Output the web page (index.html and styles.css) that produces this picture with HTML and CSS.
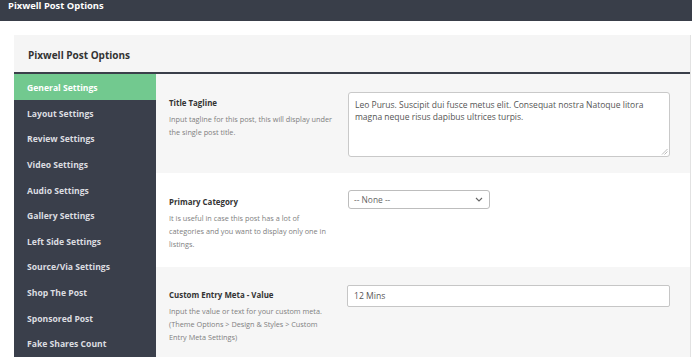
FILE: index.html
```html
<!DOCTYPE html>
<html>
<head>
<meta charset="utf-8">
<link rel="stylesheet" href="styles.css">
</head>
<body>
<div class="topbar">Pixwell Post Options</div>
<div class="panel">
  <div class="panel-head">Pixwell Post Options</div>
  <div class="panel-body">
    <ul class="tabs">
      <li class="tab active">General Settings</li>
      <li class="tab">Layout Settings</li>
      <li class="tab">Review Settings</li>
      <li class="tab">Video Settings</li>
      <li class="tab">Audio Settings</li>
      <li class="tab">Gallery Settings</li>
      <li class="tab">Left Side Settings</li>
      <li class="tab">Source/Via Settings</li>
      <li class="tab">Shop The Post</li>
      <li class="tab">Sponsored Post</li>
      <li class="tab">Fake Shares Count</li>
    </ul>
    <div class="content">
      <div class="row alt">
        <div class="label">
          <div class="title">Title Tagline</div>
          <div class="desc">Input tagline for this post, this will display under the single post title.</div>
        </div>
        <div class="field">
          <div class="textarea">Leo Purus. Suscipit dui fusce metus elit. Consequat nostra Natoque litora magna neque risus dapibus ultrices turpis.
            <svg class="grip" width="7" height="7" viewBox="0 0 7 7"><path d="M6.5 1 L1 6.5 M6.5 3.5 L3.5 6.5" stroke="#aaa" stroke-width="0.8" fill="none"/></svg>
          </div>
        </div>
      </div>
      <div class="row">
        <div class="label">
          <div class="title">Primary Category</div>
          <div class="desc">It is useful in case this post has a lot of categories and you want to display only one in listings.</div>
        </div>
        <div class="field">
          <div class="select"><span>-- None --</span>
            <svg width="8" height="5" viewBox="0 0 8 5"><path d="M1 1 L4 4 L7 1" stroke="#666" stroke-width="1.1" fill="none"/></svg>
          </div>
        </div>
      </div>
      <div class="row alt last">
        <div class="label">
          <div class="title">Custom Entry Meta - Value</div>
          <div class="desc">Input the value or text for your custom meta. (Theme Options &gt; Design &amp; Styles &gt; Custom Entry Meta Settings)</div>
        </div>
        <div class="field">
          <div class="input">12 Mins</div>
        </div>
      </div>
    </div>
  </div>
</div>
</body>
</html>
```

FILE: styles.css
```css
* { box-sizing: border-box; }
html, body { margin: 0; padding: 0; background: #fff; overflow: hidden; }
body { font-family: "Open Sans", "Noto Sans", sans-serif; width: 692px; height: 357px; }

.topbar {
  height: 21px;
  background: #393e49;
  color: #fff;
  font-weight: 700;
  font-size: 9.4px;
  line-height: 12px;
  padding-left: 8px;
}

.panel {
  margin: 14px 1px 0 14px;
  border-right: 1px solid #e2e2e2;
}
.panel-head {
  height: 39px;
  background: #f5f5f5;
  color: #333;
  font-weight: 700;
  font-size: 10px;
  display: flex;
  align-items: center;
  padding: 2px 0 0 14px;
  border-bottom: 2px solid #3a3f4a;
}
.panel-body { display: flex; }

.tabs {
  list-style: none;
  margin: 0;
  padding: 0;
  width: 142px;
  background: #3a3f4b;
  flex-shrink: 0;
}
.tab {
  height: 25.6px;
  display: flex;
  align-items: center;
  padding: 3px 0 0 13px;
  color: #dcdde0;
  font-weight: 700;
  font-size: 8.6px;
}
.tab.active { background: #72c98f; color: #fff; }

.content { flex: 1; }
.row {
  display: flex;
  padding: 18px 20px 16px 13px;
  background: #fff;
}
.row.alt { background: #f6f6f6; }
.row.last { height: 91px; }
.label { width: 179px; padding-top: 4.5px; flex-shrink: 0; }
.title {
  font-weight: 700;
  font-size: 7.9px;
  line-height: 12px;
  color: #333;
}
.desc {
  width: 166px;
  margin-top: 4px;
  font-size: 7.3px;
  line-height: 13px;
  color: #808080;
}
.field { flex: 1; }

.textarea {
  position: relative;
  height: 65px;
  background: #fff;
  border: 1px solid #c9c9c9;
  border-radius: 3px;
  padding: 6px 10px 0 6px;
  font-size: 8.5px;
  line-height: 12px;
  color: #555;
}
.grip { position: absolute; right: 1px; bottom: 1px; }

.select {
  width: 142px;
  height: 19px;
  margin-top: -1px;
  background: #fff;
  border: 1px solid #bdbdbd;
  border-radius: 3px;
  display: flex;
  align-items: center;
  justify-content: space-between;
  padding: 0 6px 0 5px;
  font-size: 8.4px;
  color: #666;
}

.input {
  height: 22px;
  background: #fff;
  border: 1px solid #c6c6c6;
  border-radius: 2px;
  display: flex;
  align-items: center;
  padding-left: 6px;
  font-size: 8.6px;
  color: #555;
  margin-left: -1px;
}
```
